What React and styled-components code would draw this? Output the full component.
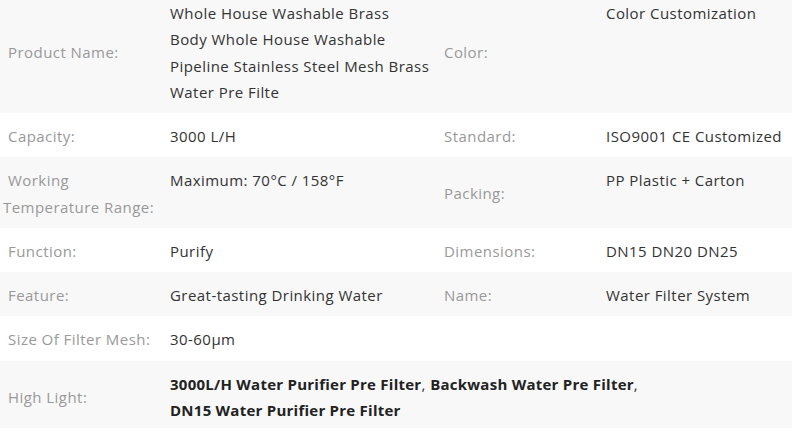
import React from 'react';
import styled, { createGlobalStyle } from 'styled-components';

const GlobalStyle = createGlobalStyle`
  html, body {
    margin: 0;
    padding: 0;
    background: #fff;
    overflow: hidden;
  }
  body {
    font-family: "Open Sans", "Noto Sans", sans-serif;
    font-size: 15px;
    letter-spacing: 0.45px;
  }
`;

const specs = [
  { label: 'Product Name:', value: 'Whole House Washable Brass Body Whole House Washable Pipeline Stainless Steel Mesh Brass Water Pre Filte', label2: 'Color:', value2: 'Color Customization' },
  { label: 'Capacity:', value: '3000 L/H', label2: 'Standard:', value2: 'ISO9001 CE Customized' },
  { label: 'Working Temperature Range:', value: 'Maximum: 70°C / 158°F', label2: 'Packing:', value2: 'PP Plastic + Carton' },
  { label: 'Function:', value: 'Purify', label2: 'Dimensions:', value2: 'DN15 DN20 DN25' },
  { label: 'Feature:', value: 'Great-tasting Drinking Water', label2: 'Name:', value2: 'Water Filter System' },
  { label: 'Size Of Filter Mesh:', value: '30-60μm' },
];

const highlights = [
  '3000L/H Water Purifier Pre Filter',
  'Backwash Water Pre Filter',
  'DN15 Water Purifier Pre Filter',
];

export default function App() {
  return (
    <>
      <GlobalStyle />
      <Wrap>
        <Table>
          <colgroup>
            <col style={{ width: 162 }} />
            <col style={{ width: 274 }} />
            <col style={{ width: 162 }} />
            <col />
          </colgroup>
          <tbody>
            {specs.map((row, i) => (
              <Row key={row.label} $odd={i % 2 === 0}>
                <Label>{row.label}</Label>
                {row.label2 ? (
                  <>
                    <Value>{row.value}</Value>
                    <Label>{row.label2}</Label>
                    <Value>{row.value2}</Value>
                  </>
                ) : (
                  <Value colSpan={3}>{row.value}</Value>
                )}
              </Row>
            ))}
            <Row $odd>
              <Label>High Light:</Label>
              <Value colSpan={3}>
                {highlights.map((h, i) => (
                  <React.Fragment key={h}>
                    <Strong>{h}</Strong>
                    {i < highlights.length - 1 && ', '}
                  </React.Fragment>
                ))}
              </Value>
            </Row>
          </tbody>
        </Table>
      </Wrap>
    </>
  );
}

const Wrap = styled.div`
  width: 792px;
  margin-top: -10px;
`;

const Table = styled.table`
  width: 100%;
  table-layout: fixed;
  border-collapse: collapse;
  border-spacing: 0;
`;

const Row = styled.tr`
  background: ${p => (p.$odd ? '#f8f8f8' : '#ffffff')};
`;

const Label = styled.td`
  padding: 10px 4px 8px 3px;
  text-indent: 5px;
  vertical-align: middle;
  color: #999;
  line-height: 26.25px;
`;

const Value = styled.td`
  padding: 10px 6px 8px 8px;
  vertical-align: top;
  color: #333;
  line-height: 26.25px;
`;

const Strong = styled.b`
  font-weight: 700;
  color: #222;
  letter-spacing: 0.25px;
  white-space: nowrap;
`;
